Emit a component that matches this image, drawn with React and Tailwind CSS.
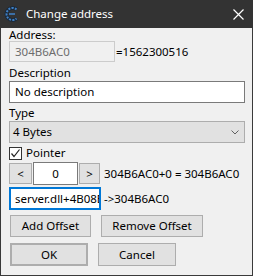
const Btn = ({ children, className = "" }) => (
  <div
    className={`flex items-center justify-center bg-[#e1e1e1] border border-[#adadad] text-[#000] whitespace-nowrap ${className}`}
  >
    {children}
  </div>
);

const Logo = () => (
  <svg width="16" height="16" viewBox="0 0 16 16">
    <path
      d="M12.5 3.5 A6 6 0 1 0 12.5 12.5"
      fill="none"
      stroke="#1b2a3a"
      strokeWidth="4"
    />
    <path
      d="M12.5 3.5 A6 6 0 1 0 12.5 12.5"
      fill="none"
      stroke="#3f7fc4"
      strokeWidth="2"
      strokeDasharray="2 1.2"
    />
    <path d="M5 8 h6" stroke="#3f7fc4" strokeWidth="1.6" />
  </svg>
);

export default function App() {
  return (
    <div
      className="w-[253px] h-[276px] bg-[#f0f0f0] border-x border-b border-[#3a3a3a] text-[11.5px] text-black flex flex-col whitespace-nowrap"
      style={{ fontFamily: '"Noto Sans", "Open Sans", sans-serif' }}
    >
      <div className="h-[28px] -mx-px bg-[#333333] flex items-center shrink-0">
        <div className="ml-[4px] mr-[6px]">
          <Logo />
        </div>
        <span className="text-white text-[11.5px] leading-none">Change address</span>
        <div className="ml-auto mr-[9px]">
          <svg width="11" height="11" viewBox="0 0 11 11">
            <path d="M0.5 0.5 L10.5 10.5 M10.5 0.5 L0.5 10.5" stroke="#fff" strokeWidth="1.2" />
          </svg>
        </div>
      </div>

      <div className="pl-[8px] pr-[7px] flex flex-col">
        <div className="h-[13px] flex items-end leading-[13px]">Address:</div>
        <div className="h-[21px] flex items-center">
          <div className="w-[106px] h-full border border-[#cccccc] bg-[#f0f0f0] text-[#6d6d6d] flex items-center pl-[5px]">
            304B6AC0
          </div>
          <span className="ml-px">=1562300516</span>
        </div>

        <div className="h-[19px] flex items-end leading-[16px]">Description</div>
        <div className="h-[22px] border border-[#7a7a7a] bg-white flex items-center pl-[5px]">
          No description
        </div>

        <div className="h-[18px] flex items-end leading-[16px]">Type</div>
        <div className="h-[22px] border border-[#adadad] bg-[#e1e1e1] flex items-center pl-[3px]">
          <span>4 Bytes</span>
          <svg className="ml-auto mr-[5px]" width="8" height="5" viewBox="0 0 8 5">
            <path d="M0.5 0.5 L4 4 L7.5 0.5" fill="none" stroke="#606060" strokeWidth="1" />
          </svg>
        </div>

        <div className="mt-[3px] h-[14px] flex items-center">
          <div className="w-[13px] h-[13px] border border-[#333] bg-white flex items-center justify-center">
            <svg width="11" height="11" viewBox="0 0 11 11">
              <path d="M1.5 5.5 L4 8.5 L9.5 1.5" fill="none" stroke="#222" strokeWidth="1.2" />
            </svg>
          </div>
          <span className="ml-[4px]">Pointer</span>
        </div>

        <div className="mt-[3px] h-[21px] flex items-center">
          <Btn className="w-[23px] h-full">&lt;</Btn>
          <div className="ml-[1px] w-[45px] h-[23px] border border-[#7a7a7a] bg-white flex items-center justify-center">
            0
          </div>
          <Btn className="ml-[1px] w-[21px] h-full">&gt;</Btn>
          <span className="ml-[4px]">304B6AC0+0 = 304B6AC0</span>
        </div>

        <div className="mt-[3px] h-[23px] flex items-center">
          <div className="w-[92px] h-full border-2 border-[#0078d7] bg-white flex items-center pl-[4px] overflow-hidden">
            server.dll+4B08E
          </div>
          <span className="ml-[3px]">-&gt;304B6AC0</span>
        </div>

        <div className="mt-[5px] h-[22px] flex">
          <Btn className="ml-px w-[81px] h-full">Add Offset</Btn>
          <Btn className="ml-[10px] w-[102px] h-full">Remove Offset</Btn>
        </div>

        <div className="mt-[6px] h-[23px] flex">
          <Btn className="ml-px w-[78px] h-full border-2 border-[#0078d7]">OK</Btn>
          <Btn className="ml-[10px] w-[78px] h-full">Cancel</Btn>
        </div>
      </div>
    </div>
  );
}
